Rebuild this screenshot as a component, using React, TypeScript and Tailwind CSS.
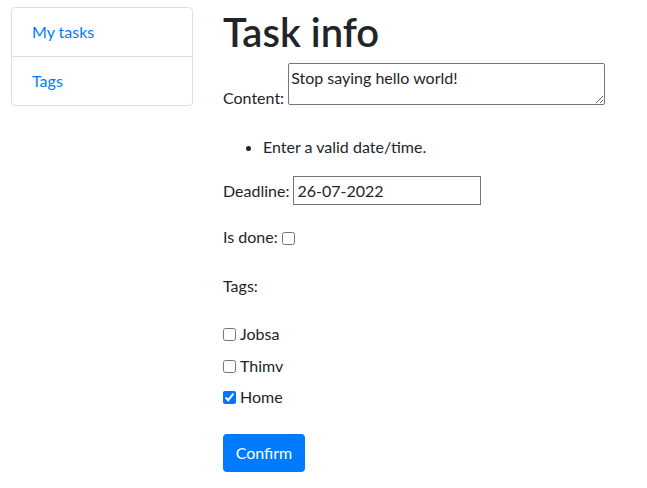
import React from 'react';

const tags = [
    { name: 'Jobsa', checked: false, gap: 'mt-[24px]' },
    { name: 'Thimv', checked: false, gap: 'mt-[8px]' },
    { name: 'Home', checked: true, gap: 'mt-[7px]' },
];

export default function App() {
    return (
        <div className="flex px-[11px] text-[16px] leading-6 text-[#212529] bg-white min-h-[488px]" style={{ fontFamily: 'Lato, "Liberation Sans", sans-serif' }}>
            <nav className="mt-[7px] w-[182px] self-start border border-[#dfdfdf] rounded-[4px]">
                <a href="#" className="block px-5 py-3 text-[#007bff]">My tasks</a>
                <a href="#" className="block px-5 py-3 text-[#007bff] border-t border-[#dfdfdf]">Tags</a>
            </nav>

            <main className="ml-[30px] flex flex-col items-start">
                <h1 className="mt-[8px] text-[40px] leading-[48px] font-semibold">Task info</h1>

                <div className="mt-[7px] flex items-end">
                    <label className="mb-[-5px] mr-[4px]">Content:</label>
                    <textarea
                        defaultValue="Stop saying hello world!"
                        className="w-[317px] h-[42px] border border-[#767676] rounded-[2px] px-[2px] py-[2px] leading-normal"
                    />
                </div>

                <ul className="mt-[30px] list-disc pl-10">
                    <li>Enter a valid date/time.</li>
                </ul>

                <div className="mt-[17px] flex items-center h-[29px]">
                    <label className="mr-[4px]">Deadline:</label>
                    <input
                        type="text"
                        defaultValue="26-07-2022"
                        className="w-[188px] h-[29px] border border-[#767676] px-[3px] py-[1px]"
                    />
                </div>

                <div className="mt-[20px] flex items-center h-6">
                    <label className="mr-[4px]">Is done:</label>
                    <input type="checkbox" className="m-0 w-[13px] h-[13px] mt-[2px]" />
                </div>

                <p className="mt-[25px]">Tags:</p>

                {tags.map(t => (
                    <label key={t.name} className={`${t.gap} flex items-center h-6`}>
                        <input type="checkbox" defaultChecked={t.checked} className="m-0 w-[13px] h-[13px]" />
                        <span className="ml-[4px]">{t.name}</span>
                    </label>
                ))}

                <button className="mt-[25px] w-[82px] h-[38px] rounded-[4px] bg-[#007bff] text-white">Confirm</button>
            </main>
        </div>
    );
}
